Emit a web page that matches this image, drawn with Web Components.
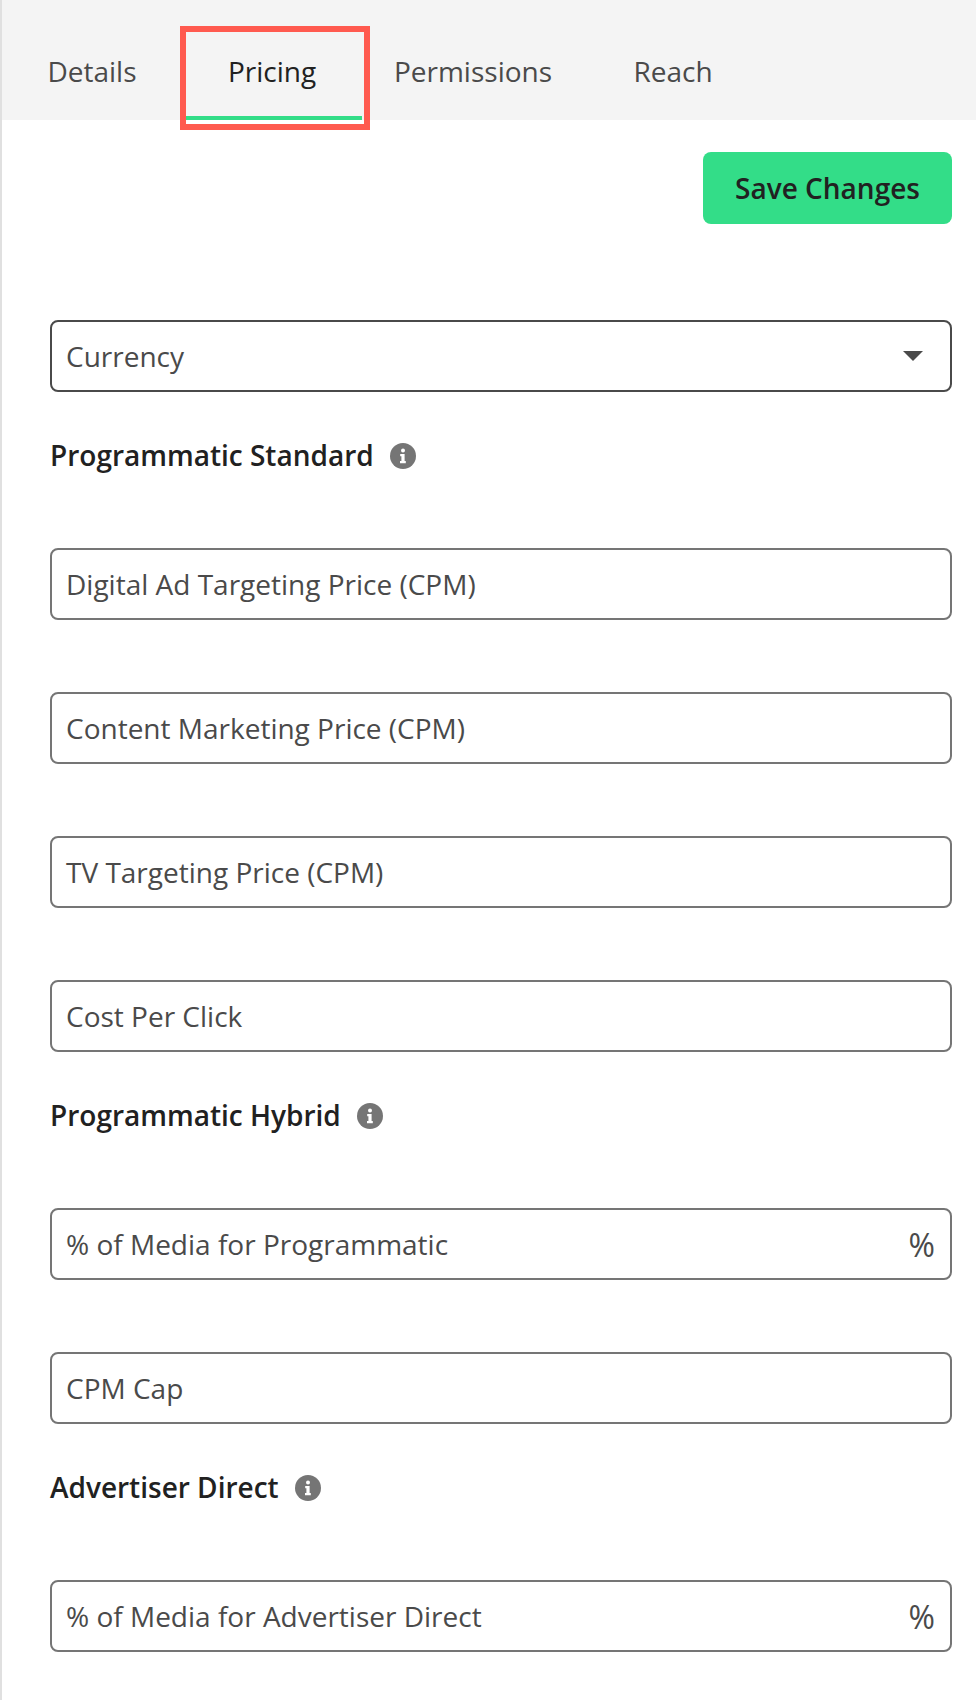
<!DOCTYPE html>
<html>
<head>
<meta charset="utf-8">
<style>
  html, body { margin: 0; background: #fff; }
  body { font-family: "Open Sans", "Liberation Sans", sans-serif; }
</style>
</head>
<body>
<pricing-page>
  <tab-bar slot="tabs">
    <tab-item style="--w: 184px; --pr: 4px">Details</tab-item>
    <tab-item active style="--w: 176px; --pr: 4px">Pricing</tab-item>
    <tab-item style="--w: 222px">Permissions</tab-item>
    <tab-item style="--w: 178px">Reach</tab-item>
  </tab-bar>
  <save-button>Save Changes</save-button>
  <form-field select dark>Currency</form-field>
  <section-title>Programmatic Standard</section-title>
  <form-field>Digital Ad Targeting Price (CPM)</form-field>
  <form-field gap>Content Marketing Price (CPM)</form-field>
  <form-field gap>TV Targeting Price (CPM)</form-field>
  <form-field gap>Cost Per Click</form-field>
  <section-title>Programmatic Hybrid</section-title>
  <form-field suffix="%">% of Media for Programmatic</form-field>
  <form-field gap>CPM Cap</form-field>
  <section-title>Advertiser Direct</section-title>
  <form-field suffix="%">% of Media for Advertiser Direct</form-field>
</pricing-page>

<script>
class PricingPage extends HTMLElement {
  constructor() {
    super();
    this.attachShadow({ mode: 'open' });
    this.shadowRoot.innerHTML = `
      <style>
        :host { display: block; height: 1700px; box-sizing: border-box; border-left: 2px solid #e0e0e0; overflow: hidden; }
        .form { display: flex; flex-direction: column; padding: 0 24px 0 48px; }
      </style>
      <slot name="tabs"></slot>
      <div class="form"><slot></slot></div>
    `;
  }
}

class TabBar extends HTMLElement {
  constructor() {
    super();
    this.attachShadow({ mode: 'open' });
    this.shadowRoot.innerHTML = `
      <style>
        :host { display: flex; height: 120px; background: #f4f4f4; }
      </style>
      <slot></slot>
    `;
  }
}

class TabItem extends HTMLElement {
  constructor() {
    super();
    this.attachShadow({ mode: 'open' });
    this.shadowRoot.innerHTML = `
      <style>
        :host { display: flex; justify-content: center; position: relative; box-sizing: border-box; width: var(--w); height: 120px; padding: 50px var(--pr, 0) 0 0; font-size: 28px; line-height: 42px; color: #4a4a4a; }
        :host([active]) { color: #212121; }
        .line, .mark { display: none; position: absolute; }
        :host([active]) .line, :host([active]) .mark { display: block; }
        .line { left: 0; right: 0; bottom: 0; height: 4px; background: #33dd88; }
        .mark { left: -6px; top: 26px; width: 190px; height: 104px; box-sizing: border-box; border: 6px solid #ff5a4f; }
      </style>
      <slot></slot>
      <div class="line"></div>
      <div class="mark"></div>
    `;
  }
}

class SaveButton extends HTMLElement {
  constructor() {
    super();
    this.attachShadow({ mode: 'open' });
    this.shadowRoot.innerHTML = `
      <style>
        :host { display: flex; align-self: flex-end; align-items: center; justify-content: center; width: 249px; height: 72px; margin-top: 32px; margin-bottom: 96px; border-radius: 8px; background: #33dd88; color: #212121; font-size: 28px; font-weight: 600; }
      </style>
      <slot></slot>
    `;
  }
}

class FormField extends HTMLElement {
  constructor() {
    super();
    this.attachShadow({ mode: 'open' });
    const suffix = this.getAttribute('suffix');
    this.shadowRoot.innerHTML = `
      <style>
        :host { display: flex; align-items: center; justify-content: space-between; box-sizing: border-box; height: 72px; padding: 0 15px 0 14px; border: 2px solid #757575; border-radius: 8px; font-size: 28px; color: #4a4a4a; }
        :host([dark]) { border-color: #4a4a4a; }
        :host([gap]) { margin-top: 72px; }
        svg { display: block; margin-right: 12px; }
        .suffix { font-size: 32px; }
      </style>
      <span><slot></slot></span>
      ${suffix ? `<span class="suffix">${suffix}</span>` : ''}
      ${this.hasAttribute('select') ? `<svg width="20" height="10" viewBox="0 0 20 10"><path d="M0 0h20L10 10z" fill="#4a4a4a"/></svg>` : ''}
    `;
  }
}

class SectionTitle extends HTMLElement {
  constructor() {
    super();
    this.attachShadow({ mode: 'open' });
    this.shadowRoot.innerHTML = `
      <style>
        :host { display: flex; align-items: center; height: 156px; box-sizing: border-box; padding-bottom: 30px; gap: 16px; font-size: 28px; font-weight: 600; color: #212121; }
        svg { display: block; margin-top: 2px; }
      </style>
      <span><slot></slot></span>
      <svg width="26" height="26" viewBox="0 0 26 26">
        <circle cx="13" cy="13" r="13" fill="#757575"/>
        <circle cx="13" cy="7.6" r="2" fill="#fff"/>
        <path d="M10.2 11h4.4v7h1.2v2.2H10v-2.2h1.4v-4.8h-1.2z" fill="#fff"/>
      </svg>
    `;
  }
}

customElements.define('pricing-page', PricingPage);
customElements.define('tab-bar', TabBar);
customElements.define('tab-item', TabItem);
customElements.define('save-button', SaveButton);
customElements.define('form-field', FormField);
customElements.define('section-title', SectionTitle);
</script>
</body>
</html>
